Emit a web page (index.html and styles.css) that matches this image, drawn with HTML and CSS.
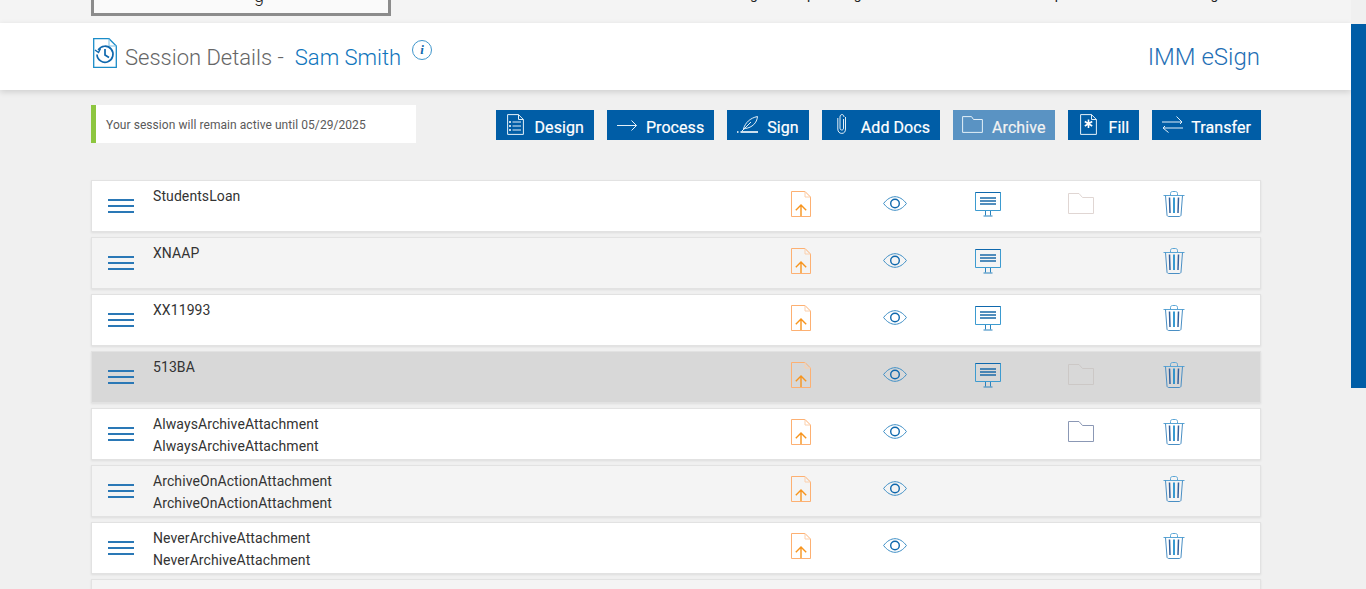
FILE: index.html
```html
<!DOCTYPE html>
<html lang="en">
<head>
<meta charset="utf-8">
<title>Session Details</title>
<link rel="stylesheet" href="styles.css">
</head>
<body>
<svg class="defs" width="0" height="0" aria-hidden="true">
  <symbol id="i-doc" viewBox="0 0 20 26">
    <path d="M.5.5H14L19.500 6V25.500H.5Z" fill="none" stroke="#fdb072"/>
    <path d="M14 .5V6H19.500" fill="none" stroke="#fcd0ac"/>
    <path d="M10 25V14M4.800 19.200 10 14l5.200 5.200" fill="none" stroke="#f7941d" stroke-width="1.400"/>
  </symbol>
  <symbol id="i-eye" viewBox="0 0 24 15">
    <path d="M.6 7.500C4 3 8 .7 12 .7S20 3 23.400 7.500C20 12 16 14.300 12 14.300S4 12 .6 7.500Z" fill="none" stroke="#3f8fc6"/>
    <circle cx="12" cy="7.500" r="4.300" fill="none" stroke="#0f68ad" stroke-width="1.400"/>
  </symbol>
  <symbol id="i-mon" viewBox="0 0 26 25">
    <path d="M.5.5H25.500V18.500H.5Z" fill="none" stroke="#3d9bd0"/>
    <path d="M.5.5H25.500" fill="none" stroke="#0f68ad"/>
    <path d="M5 6H21M5 9H21M5 12H21" fill="none" stroke="#1a69a8" stroke-width="1.300"/>
    <path d="M10.500 19V23.500M15.500 19V23.500M8.500 24H17.500" fill="none" stroke="#2a82bd"/>
  </symbol>
  <symbol id="i-folder" viewBox="0 0 26 21">
    <path d="M.5 20.500V.5H11L14.500 4.500H25.500V20.500Z" fill="none" stroke="currentColor"/>
  </symbol>
  <symbol id="i-trash" viewBox="0 0 22 26">
    <path d="M.5 4.500H21.500M7.500 4.500V2.500C7.500 1.200 8.500.5 9.500.5H12.500C13.500.5 14.500 1.200 14.500 2.500V4.500" fill="none" stroke="#5aa5d5"/>
    <path d="M2.500 4.500 4 24C4 25 5 25.500 6 25.500H16C17 25.500 18 25 18 24L19.500 4.500" fill="none" stroke="#4a8fc4"/>
    <path d="M6.500 6.500 7 22" fill="none" stroke="#33609c" stroke-width="1.500"/>
    <path d="M11 6.500V22" fill="none" stroke="#1688c9" stroke-width="1.700"/>
    <path d="M15.500 6.500 15 22" fill="none" stroke="#33609c" stroke-width="1.500"/>
  </symbol>
</svg>

<div class="shell">
  <div class="page">
    <div class="topstrip">
      <div class="topbox"><span>g</span></div>
      <div class="topnav"><span class="t1">g</span><span class="t2">p</span><span class="t3">g</span><span class="t4">p</span><span class="t5">g</span></div>
    </div>

    <header class="titlebar">
      <div class="title">
        <svg class="title-icon" viewBox="0 0 24 30">
          <path d="M.7.7H16L23.300 8V29.300H.7Z" fill="none" stroke="#1a8cc8" stroke-width="1.300"/>
          <path d="M16 .7V8H23.300" fill="none" stroke="#7cc0e4"/>
          <path d="M5.200 12A8 8 0 1 1 4 16.500" fill="none" stroke="#0f68ad" stroke-width="1.700"/>
          <path d="M2 12 5.500 14.500 7.500 10.500" fill="none" stroke="#0f68ad" stroke-width="1.500"/>
          <path d="M12 11V17L16 19.500" fill="none" stroke="#0f68ad" stroke-width="1.700"/>
        </svg>
        <span class="title-main">Session Details -</span>
        <span class="title-name">Sam Smith</span>
        <span class="info">i</span>
      </div>
      <div class="brand">IMM eSign</div>
    </header>

    <main class="content">
      <div class="toolbar">
        <div class="notice">Your session will remain active until 05/29/2025</div>
        <nav class="actions">
          <a class="btn">
            <svg class="btn-icon i-design" viewBox="0 0 17 21"><path d="M.6.6H11.500L16.400 5.500V20.400H.6Z"/><path d="M11.500.6V5.500H16.400"/><path d="M5.500 8H14M5.500 12H14M5.500 16H14"/><path class="thick" d="M2 8H4M2 12H4M2 16H4"/></svg>
            Design</a>
          <a class="btn">
            <svg class="btn-icon i-process" viewBox="0 0 20 11"><path d="M0 5.500H19.500M14.500 .5 19.500 5.500 14.500 10.500"/></svg>
            Process</a>
          <a class="btn">
            <svg class="btn-icon i-sign" viewBox="0 0 21 17"><path d="M6.500 13C8 7 13 2 20.500 .5 20 7 15 11.500 8.500 12.500Z"/><path d="M5 15 14 6"/><path class="thick" d="M3.500 16H21"/><path class="thick" d="M0 16H1.500"/></svg>
            Sign</a>
          <a class="btn">
            <svg class="btn-icon i-docs" viewBox="0 0 9 20"><path d="M6.500 5V14C6.500 15.500 5.800 16 4.800 16S3 15.500 3 14V3C3 1.500 3.800.6 5 .6S7 1.500 7 3"/><path d="M.8 4V15C.8 17.800 2.500 19.400 4.800 19.400S8.500 17.800 8.500 15V3"/></svg>
            Add Docs</a>
          <a class="btn btn-off">
            <svg class="btn-icon i-archive" viewBox="0 0 21 17"><path d="M.6 16.400V.6H9.500L11.500 3.500H20.400V16.400Z"/></svg>
            Archive</a>
          <a class="btn">
            <svg class="btn-icon i-fill" viewBox="0 0 17 21"><path d="M.6.6H11.500L16.400 5.500V20.400H.6Z"/><path d="M11.500.6V5.500H16.400"/><path class="thick" d="M8.500 5.500V14M4.800 7.500 12.200 12M12.200 7.500 4.800 12"/></svg>
            Fill</a>
          <a class="btn">
            <svg class="btn-icon i-transfer" viewBox="0 0 21 17"><path d="M0 6H20M14.500 .5 20 6 18 8M1 12H21M6.500 16.500 1 12 3 10"/></svg>
            Transfer</a>
        </nav>
      </div>

      <ul class="list">
        <li class="row">
          <div class="handle"><i></i><i></i><i></i></div>
          <div class="name">StudentsLoan</div>
          <div class="cell"><svg class="ic doc"><use href="#i-doc"/></svg></div>
          <div class="cell"><svg class="ic eye"><use href="#i-eye"/></svg></div>
          <div class="cell"><svg class="ic mon"><use href="#i-mon"/></svg></div>
          <div class="cell"><svg class="ic folder faint"><use href="#i-folder"/></svg></div>
          <div class="cell"><svg class="ic trash"><use href="#i-trash"/></svg></div>
        </li>
        <li class="row alt">
          <div class="handle"><i></i><i></i><i></i></div>
          <div class="name">XNAAP</div>
          <div class="cell"><svg class="ic doc"><use href="#i-doc"/></svg></div>
          <div class="cell"><svg class="ic eye"><use href="#i-eye"/></svg></div>
          <div class="cell"><svg class="ic mon"><use href="#i-mon"/></svg></div>
          <div class="cell"></div>
          <div class="cell"><svg class="ic trash"><use href="#i-trash"/></svg></div>
        </li>
        <li class="row">
          <div class="handle"><i></i><i></i><i></i></div>
          <div class="name">XX11993</div>
          <div class="cell"><svg class="ic doc"><use href="#i-doc"/></svg></div>
          <div class="cell"><svg class="ic eye"><use href="#i-eye"/></svg></div>
          <div class="cell"><svg class="ic mon"><use href="#i-mon"/></svg></div>
          <div class="cell"></div>
          <div class="cell"><svg class="ic trash"><use href="#i-trash"/></svg></div>
        </li>
        <li class="row hover">
          <div class="handle"><i></i><i></i><i></i></div>
          <div class="name">513BA</div>
          <div class="cell"><svg class="ic doc"><use href="#i-doc"/></svg></div>
          <div class="cell"><svg class="ic eye"><use href="#i-eye"/></svg></div>
          <div class="cell"><svg class="ic mon"><use href="#i-mon"/></svg></div>
          <div class="cell"><svg class="ic folder faint"><use href="#i-folder"/></svg></div>
          <div class="cell"><svg class="ic trash"><use href="#i-trash"/></svg></div>
        </li>
        <li class="row">
          <div class="handle"><i></i><i></i><i></i></div>
          <div class="name">AlwaysArchiveAttachment<br>AlwaysArchiveAttachment</div>
          <div class="cell"><svg class="ic doc"><use href="#i-doc"/></svg></div>
          <div class="cell"><svg class="ic eye"><use href="#i-eye"/></svg></div>
          <div class="cell"></div>
          <div class="cell"><svg class="ic folder solid"><use href="#i-folder"/></svg></div>
          <div class="cell"><svg class="ic trash"><use href="#i-trash"/></svg></div>
        </li>
        <li class="row alt">
          <div class="handle"><i></i><i></i><i></i></div>
          <div class="name">ArchiveOnActionAttachment<br>ArchiveOnActionAttachment</div>
          <div class="cell"><svg class="ic doc"><use href="#i-doc"/></svg></div>
          <div class="cell"><svg class="ic eye"><use href="#i-eye"/></svg></div>
          <div class="cell"></div>
          <div class="cell"></div>
          <div class="cell"><svg class="ic trash"><use href="#i-trash"/></svg></div>
        </li>
        <li class="row">
          <div class="handle"><i></i><i></i><i></i></div>
          <div class="name">NeverArchiveAttachment<br>NeverArchiveAttachment</div>
          <div class="cell"><svg class="ic doc"><use href="#i-doc"/></svg></div>
          <div class="cell"><svg class="ic eye"><use href="#i-eye"/></svg></div>
          <div class="cell"></div>
          <div class="cell"></div>
          <div class="cell"><svg class="ic trash"><use href="#i-trash"/></svg></div>
        </li>
        <li class="row alt"></li>
      </ul>
    </main>
  </div>
  <div class="scrollbar"><div class="thumb"></div></div>
</div>
</body>
</html>
```
FILE: styles.css
```css
* { box-sizing: border-box; }

html, body {
  margin: 0;
  height: 589px;
  overflow: hidden;
}

body {
  background: #f0f0f0;
  font-family: Roboto, "Liberation Sans", sans-serif;
  color: #333;
}

.defs { position: absolute; }

.shell {
  display: grid;
  grid-template-columns: 1351px 15px;
  height: 589px;
  overflow: hidden;
}

.page { min-width: 0; overflow: hidden; }

.scrollbar { background: #f0f0f0; padding-top: 24px; }
.thumb { height: 364px; background: #005da6; }

/* Top strip: bottom of the scrolled-away app header */
.topstrip {
  height: 23px;
  background: #f4f4f4;
  padding-left: 91px;
  display: flex;
  align-items: flex-start;
  overflow: hidden;
}

.topbox {
  width: 300px;
  height: 50px;
  margin-top: -34px;
  flex: none;
  background: #fafafa;
  border: 3px solid #8c8c8c;
  font-size: 18px;
  font-weight: 300;
  line-height: 21px;
  padding: 16px 0 0 160px;
  color: #222;
}

.topnav {
  display: flex;
  margin-top: -16px;
  font-size: 14px;
  line-height: 20px;
  color: #222;
}
.t1 { margin-left: 359px; }
.t2 { margin-left: 49px; }
.t3 { margin-left: 39px; }
.t4 { margin-left: 193px; }
.t5 { margin-left: 148px; }

/* Title bar */
.titlebar {
  height: 67px;
  background: #fff;
  box-shadow: 0 2px 6px rgba(0, 0, 0, .14);
  padding: 0 91px 0 93px;
  display: flex;
  justify-content: space-between;
  align-items: flex-start;
  position: relative;
}

.title { display: flex; align-items: flex-start; padding-top: 15px; }
.title-icon { width: 24px; height: 30px; flex: none; }
.title-main, .title-name {
  font-size: 22px;
  font-weight: 300;
  line-height: 30px;
  padding-top: 5px;
}
.title-main { color: #666; margin-left: 8px; }
.title-name { color: #0f75bc; margin-left: 11px; }

.info {
  width: 20px;
  height: 20px;
  margin: 2px 0 0 11px;
  border: 1px solid #3f96cc;
  border-radius: 50%;
  color: #0f68ad;
  font: italic 700 13px/18px "Liberation Serif", serif;
  text-align: center;
}

.brand {
  color: #1f6fb5;
  font-size: 24px;
  font-weight: 300;
  line-height: 30px;
  padding-top: 19px;
}

/* Content */
.content { padding: 0 90px 0 91px; }

.toolbar {
  display: flex;
  justify-content: space-between;
  align-items: flex-start;
  padding-top: 15px;
  height: 90px;
}

.notice {
  width: 325px;
  height: 38px;
  background: #fff;
  border-left: 5px solid #8dc63f;
  padding-left: 10px;
  font-size: 12px;
  line-height: 40px;
  letter-spacing: .06px;
  color: #5a5a5a;
}

.actions { display: flex; gap: 13px; margin-top: 5px; }

.btn {
  height: 30px;
  display: flex;
  align-items: flex-start;
  background: #005da6;
  color: #fff;
  font-size: 16px;
  line-height: 35px;
  letter-spacing: .07px;
  padding: 0 10px;
  white-space: nowrap;
  -webkit-text-stroke: .2px;
}
.btn-off { background: #5a93c3; color: #f2f2f2; }

.btn-icon {
  flex: none;
  fill: none;
  stroke: #e4f0f8;
  stroke-width: 1;
}
.btn-icon .thick { stroke-width: 1.600; stroke: #fff; }
.i-design { width: 17px; height: 21px; margin: 4px 11px 0 1px; }
.i-process { width: 20px; height: 11px; margin: 10px 9px 0 0; }
.i-sign { width: 21px; height: 17px; margin: 6px 9px 0 0; }
.i-docs { width: 9px; height: 20px; margin: 4px 15px 0 5px; }
.i-archive { width: 21px; height: 17px; margin: 6px 9px 0 -1px; }
.i-fill { width: 17px; height: 21px; margin: 4px 11px 0 2px; }
.i-transfer { width: 21px; height: 17px; margin: 6px 8px 0 0; }

.list { list-style: none; margin: 0; padding: 0; }

.row {
  display: grid;
  grid-template-columns: 61px 1fr repeat(5, 93.4px) 39px;
  height: 52px;
  margin-bottom: 5px;
  background: #fff;
  border: 1px solid #e2e2e2;
  box-shadow: 0 1px 2px rgba(0, 0, 0, .08);
}
.row.alt { background: #f4f4f4; }
.row.hover { background: #d8d8d8; }

.handle { padding: 18px 0 0 16px; }
.handle i {
  display: block;
  width: 26px;
  height: 2px;
  margin-bottom: 4px;
  background: #2a78b6;
}

.name {
  font-size: 14px;
  line-height: 22px;
  padding-top: 4px;
  letter-spacing: .09px;
  color: #333;
}

.cell { display: flex; justify-content: center; }

.ic { display: block; }
.doc { width: 20px; height: 26px; margin-top: 10px; }
.eye { width: 24px; height: 15px; margin: 15px 0 0 1px; }
.mon { width: 26px; height: 25px; margin-top: 11px; }
.folder { width: 26px; height: 21px; margin-top: 12px; }
.folder.faint { color: #e0d6d3; }
.hover .folder.faint { color: #ccc8c6; }
.folder.solid { color: #8b98b5; }
.trash { width: 22px; height: 26px; margin-top: 10px; }
```
